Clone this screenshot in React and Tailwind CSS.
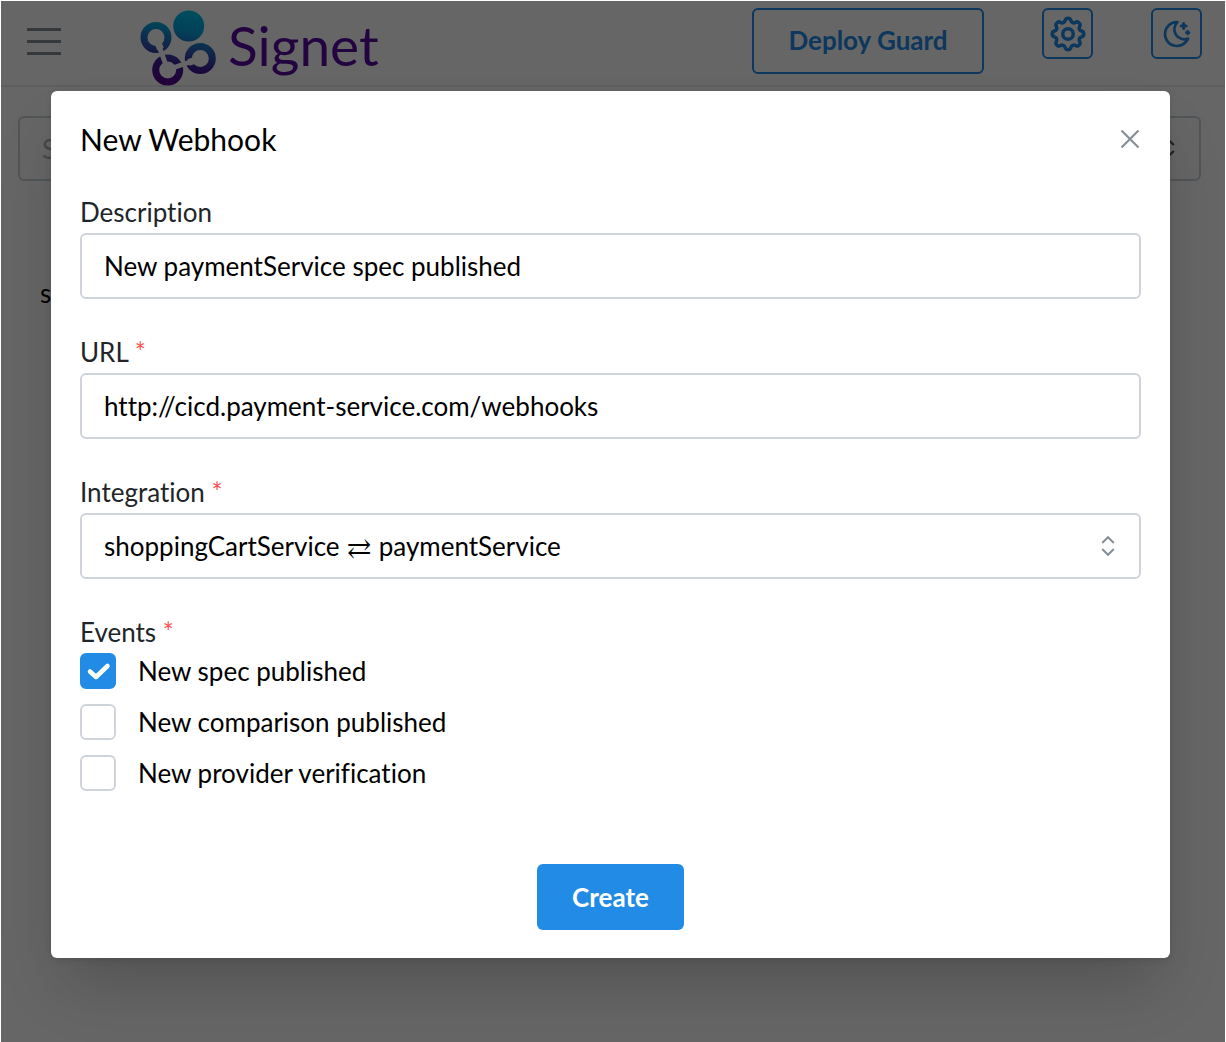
import React, { useState } from "react";
import { TbSettings, TbMoonStars } from "react-icons/tb";

const fieldClass =
  "h-[66px] w-full appearance-none rounded-md border-2 border-[#ced4da] bg-white px-[22px] text-[26px] text-black outline-none focus:border-[#228be6]";

function Selector({ className }) {
  return (
    <svg className={className} viewBox="0 0 14 22" fill="none" stroke="currentColor" strokeWidth="2" aria-hidden="true">
      <path d="M1.2 8 7 2.2 12.8 8M1.2 14 7 19.8 12.8 14" />
    </svg>
  );
}

function Logo() {
  return (
    <a href="#home" className="ml-[79px] flex items-center gap-3 text-[#5a0ca0]">
      <svg className="mt-0.5 h-[76px] w-[76px]" viewBox="140 9.500 76 76" aria-hidden="true">
        <defs>
          <linearGradient id="ink" gradientUnits="userSpaceOnUse" x1="186" y1="8" x2="172" y2="86">
            <stop offset="0" stopColor="#00c0f0" />
            <stop offset="0.28" stopColor="#04a4dc" />
            <stop offset="0.5" stopColor="#2c60b8" />
            <stop offset="0.72" stopColor="#401c98" />
            <stop offset="1" stopColor="#600090" />
          </linearGradient>
          <mask id="links" maskUnits="userSpaceOnUse" x="130" y="0" width="100" height="100">
            <rect x="130" y="0" width="100" height="100" fill="white" />
            <g stroke="black" fill="none">
              <path d="M157.500 41 165 62M196 59.500 174 67" strokeWidth="5" />
              <path d="M157.500 41 160.500 48.500M196 59.500 188.500 62" strokeWidth="7" />
            </g>
          </mask>
        </defs>
        <g mask="url(#links)">
          <circle cx="188.700" cy="25.500" r="15.500" fill="url(#ink)" />
          <g fill="none" stroke="url(#ink)" strokeWidth="7">
            <circle cx="156" cy="37" r="12" />
            <circle cx="200.300" cy="58" r="12" />
            <circle cx="167.700" cy="69.500" r="12" />
          </g>
        </g>
      </svg>
      <span className="pb-1 text-[55px] leading-[72px]">Signet</span>
    </a>
  );
}

function Header() {
  return (
    <header className="flex h-[86px] items-start border-b-2 border-[#e9ecef] pt-[7px] pr-[23px] pl-[26px]">
      <button type="button" aria-label="Open navigation" className="mt-5 flex w-[34px] flex-col gap-[9px]">
        <span className="h-[3px] w-full bg-[#868e96]" />
        <span className="h-[3px] w-full bg-[#868e96]" />
        <span className="h-[3px] w-full bg-[#868e96]" />
      </button>
      <Logo />
      <div className="ml-auto flex items-start gap-[58px]">
        <button
          type="button"
          className="h-[66px] w-[232px] rounded-md border-2 border-[#228be6] pb-0.5 text-[26px] font-bold text-[#228be6]"
        >
          Deploy Guard
        </button>
        <button
          type="button"
          aria-label="Settings"
          className="flex size-[51px] items-center justify-center rounded-md border-2 border-[#228be6] text-[#228be6]"
        >
          <TbSettings className="size-[42px]" />
        </button>
        <button
          type="button"
          aria-label="Toggle colour scheme"
          className="flex size-[51px] items-center justify-center rounded-md border-2 border-[#228be6] text-[#228be6]"
        >
          <TbMoonStars className="size-8" />
        </button>
      </div>
    </header>
  );
}

function Label({ htmlFor, children, required }) {
  return (
    <label htmlFor={htmlFor} className="mb-px block text-[26px] leading-10 text-[#212529]">
      {children}
      {required && <span className="text-[#fa5252]"> *</span>}
    </label>
  );
}

function CheckRow({ label, checked, onChange }) {
  return (
    <label className="flex items-center gap-[22px] text-[26px] leading-9 text-black">
      <span className="relative block size-9">
        <input
          type="checkbox"
          checked={checked}
          onChange={onChange}
          className="peer block size-9 appearance-none rounded-md border-2 border-[#ced4da] bg-white checked:border-[#228be6] checked:bg-[#228be6]"
        />
        <svg
          className="pointer-events-none absolute inset-0 hidden size-9 text-white peer-checked:block"
          viewBox="0 0 36 36"
          fill="none"
          stroke="currentColor"
          strokeWidth="4.500"
          strokeLinecap="round"
          strokeLinejoin="round"
          aria-hidden="true"
        >
          <path d="M10 18.500 16 24 27.500 13" />
        </svg>
      </span>
      {label}
    </label>
  );
}

const eventNames = ["New spec published", "New comparison published", "New provider verification"];

function WebhookModal() {
  const [description, setDescription] = useState("New paymentService spec published");
  const [url, setUrl] = useState("http://cicd.payment-service.com/webhooks");
  const [events, setEvents] = useState([true, false, false]);
  const toggle = (index) => setEvents(events.map((on, i) => (i === index ? !on : on)));

  return (
    <section
      role="dialog"
      aria-modal="true"
      aria-labelledby="modal-title"
      className="w-full rounded-md bg-white px-[29px] pt-7 pb-7 shadow-[0_36px_60px_-12px_rgba(0,0,0,0.2),0_2px_6px_rgba(0,0,0,0.1)]"
    >
      <header className="mb-[33px] flex items-center justify-between">
        <h2 id="modal-title" className="text-[30px] leading-10 text-black">
          New Webhook
        </h2>
        <button type="button" aria-label="Close" className="text-[#868e96]">
          <svg className="size-[22px]" viewBox="0 0 22 22" fill="none" stroke="currentColor" strokeWidth="2.200" aria-hidden="true">
            <path d="M2.500 2.500 19.500 19.500M19.500 2.500 2.500 19.500" />
          </svg>
        </button>
      </header>

      <form onSubmit={(event) => event.preventDefault()}>
        <div className="flex flex-col gap-[33px]">
          <div>
            <Label htmlFor="description">Description</Label>
            <input id="description" type="text" className={fieldClass} value={description} onChange={(e) => setDescription(e.target.value)} />
          </div>
          <div>
            <Label htmlFor="url" required>URL</Label>
            <input id="url" type="text" className={fieldClass} value={url} onChange={(e) => setUrl(e.target.value)} />
          </div>
          <div>
            <Label htmlFor="integration" required>Integration</Label>
            <div className="relative">
              <select id="integration" className={fieldClass}>
                <option>shoppingCartService ⇄ paymentService</option>
              </select>
              <Selector className="pointer-events-none absolute top-[22px] right-[26px] h-[22px] w-[14px] text-[#868e96]" />
            </div>
          </div>
          <fieldset>
            <legend className="block text-[26px] leading-10 text-[#212529]">
              Events<span className="text-[#fa5252]"> *</span>
            </legend>
            <div className="mt-px flex flex-col gap-[15px]">
              {eventNames.map((name, index) => (
                <CheckRow key={name} label={name} checked={events[index]} onChange={() => toggle(index)} />
              ))}
            </div>
          </fieldset>
        </div>
        <div className="mt-[73px] flex justify-center">
          <button type="submit" className="h-[66px] rounded-md bg-[#228be6] px-[35px] text-[26px] font-bold text-white">
            Create
          </button>
        </div>
      </form>
    </section>
  );
}

export default function App() {
  return (
    <div className="relative min-h-screen border-x border-t border-white bg-white font-['Lato','DejaVu_Math_TeX_Gyre','DejaVu_Sans',sans-serif] [font-variant-ligatures:none]">
      <Header />
      <main className="pt-[29px] pr-6 pl-[17px]">
        <div className="relative">
          <input
            type="text"
            aria-label="Search"
            placeholder="Search"
            className="h-[65px] w-full rounded-md border-2 border-[#ced4da] bg-white px-[22px] text-[26px] placeholder:text-[#adb5bd]"
          />
          <Selector className="pointer-events-none absolute top-[21px] right-[26px] h-[22px] w-[14px] text-[#495057]" />
        </div>
        <p className="mt-[92px] ml-[22px] text-[26px] leading-10 text-black">shoppingCartService</p>
      </main>
      <div className="absolute inset-0 bg-black/60 pt-[90px] pr-[55px] pb-20 pl-[50px]">
        <WebhookModal />
      </div>
    </div>
  );
}
